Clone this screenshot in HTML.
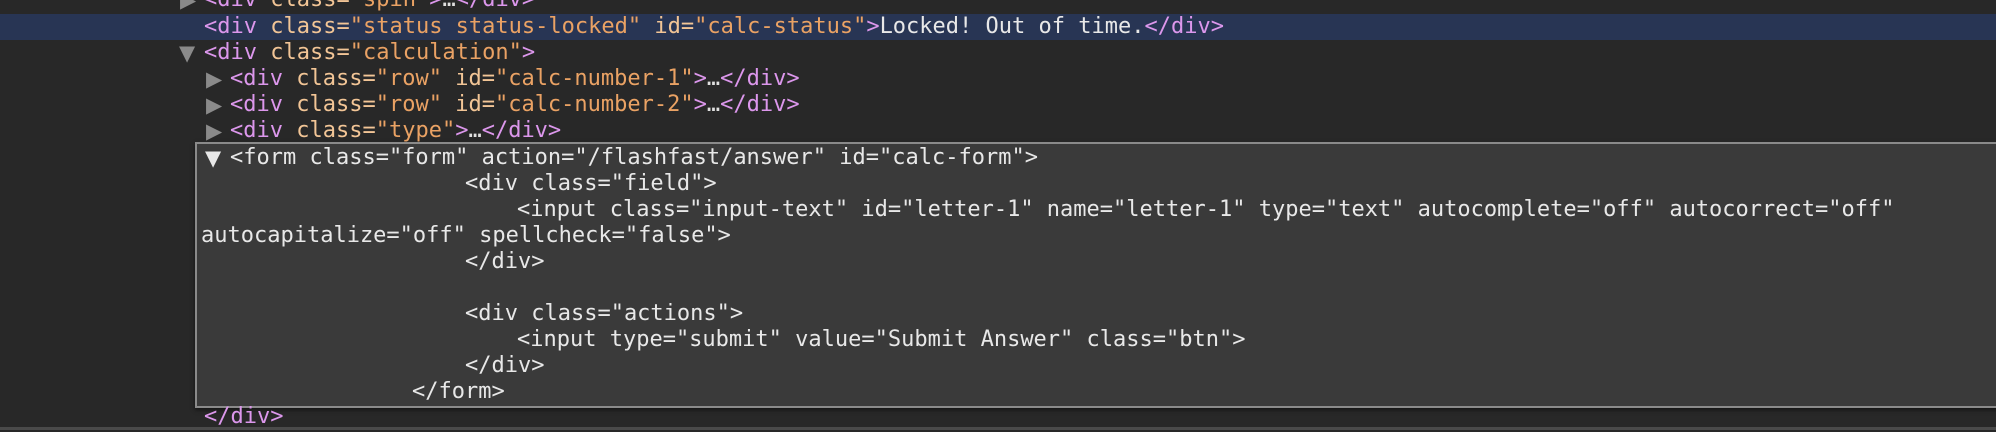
<!DOCTYPE html>
<html><head><meta charset="utf-8"><style>
body{margin:0;width:1996px;height:432px;background:#282828;overflow:hidden;position:relative;font-family:"DejaVu Sans Mono","Liberation Mono",monospace;font-size:22px;}
.l{position:absolute;height:26px;line-height:26px;white-space:pre;color:#e0e0e0;}
.t{color:#dc97ec}.a{color:#f2c596}.v{color:#eaa264}.x{color:#e8e8e8}
.tri{position:absolute;color:#8a8a8a;font-size:21px;line-height:26px;font-family:"DejaVu Sans",sans-serif;}
#hl{position:absolute;left:0;top:14px;width:1996px;height:26px;background:#283554;}
#box{position:absolute;left:195px;top:142px;width:1810px;height:262px;background:#3a3a3a;border:2px solid #8a8a8a;box-shadow:0 2px 4px rgba(0,0,0,.5);}
#bar{position:absolute;left:0;top:427px;width:1996px;height:3px;background:#4a4a4a;}
</style></head><body>
<div id="hl"></div>
<div class="tri" style="left:180px;top:-13px">▶</div>
<div class="l" style="left:204px;top:-13px"><span class="t">&lt;div</span> <span class="a">class=</span><span class="v">"spin"</span><span class="t">&gt;</span>…<span class="t">&lt;/div&gt;</span></div>
<div class="l" style="left:204px;top:14px"><span class="t">&lt;div</span> <span class="a">class=</span><span class="v">"status status-locked"</span> <span class="a">id=</span><span class="v">"calc-status"</span><span class="t">&gt;</span><span class="x">Locked! Out of time.</span><span class="t">&lt;/div&gt;</span></div>
<div class="tri" style="left:179px;top:40px">▼</div>
<div class="l" style="left:204px;top:40px"><span class="t">&lt;div</span> <span class="a">class=</span><span class="v">"calculation"</span><span class="t">&gt;</span></div>
<div class="tri" style="left:206px;top:66px">▶</div>
<div class="l" style="left:230px;top:66px"><span class="t">&lt;div</span> <span class="a">class=</span><span class="v">"row"</span> <span class="a">id=</span><span class="v">"calc-number-1"</span><span class="t">&gt;</span>…<span class="t">&lt;/div&gt;</span></div>
<div class="tri" style="left:206px;top:92px">▶</div>
<div class="l" style="left:230px;top:92px"><span class="t">&lt;div</span> <span class="a">class=</span><span class="v">"row"</span> <span class="a">id=</span><span class="v">"calc-number-2"</span><span class="t">&gt;</span>…<span class="t">&lt;/div&gt;</span></div>
<div class="tri" style="left:206px;top:118px">▶</div>
<div class="l" style="left:230px;top:118px"><span class="t">&lt;div</span> <span class="a">class=</span><span class="v">"type"</span><span class="t">&gt;</span>…<span class="t">&lt;/div&gt;</span></div>
<div id="box"></div>
<div class="tri" style="left:205px;top:145px;color:#e8e8e8">▼</div>
<div class="l x" style="left:230px;top:145px">&lt;form class="form" action="/flashfast/answer" id="calc-form"&gt;</div>
<div class="l x" style="left:465px;top:171px">&lt;div class="field"&gt;</div>
<div class="l x" style="left:517px;top:197px">&lt;input class="input-text" id="letter-1" name="letter-1" type="text" autocomplete="off" autocorrect="off"</div>
<div class="l x" style="left:201px;top:223px">autocapitalize="off" spellcheck="false"&gt;</div>
<div class="l x" style="left:465px;top:249px">&lt;/div&gt;</div>
<div class="l x" style="left:465px;top:301px">&lt;div class="actions"&gt;</div>
<div class="l x" style="left:517px;top:327px">&lt;input type="submit" value="Submit Answer" class="btn"&gt;</div>
<div class="l x" style="left:465px;top:353px">&lt;/div&gt;</div>
<div class="l x" style="left:412px;top:379px">&lt;/form&gt;</div>
<div class="l" style="left:204px;top:404px"><span class="t">&lt;/div&gt;</span></div>
<div id="bar"></div>
</body></html>
